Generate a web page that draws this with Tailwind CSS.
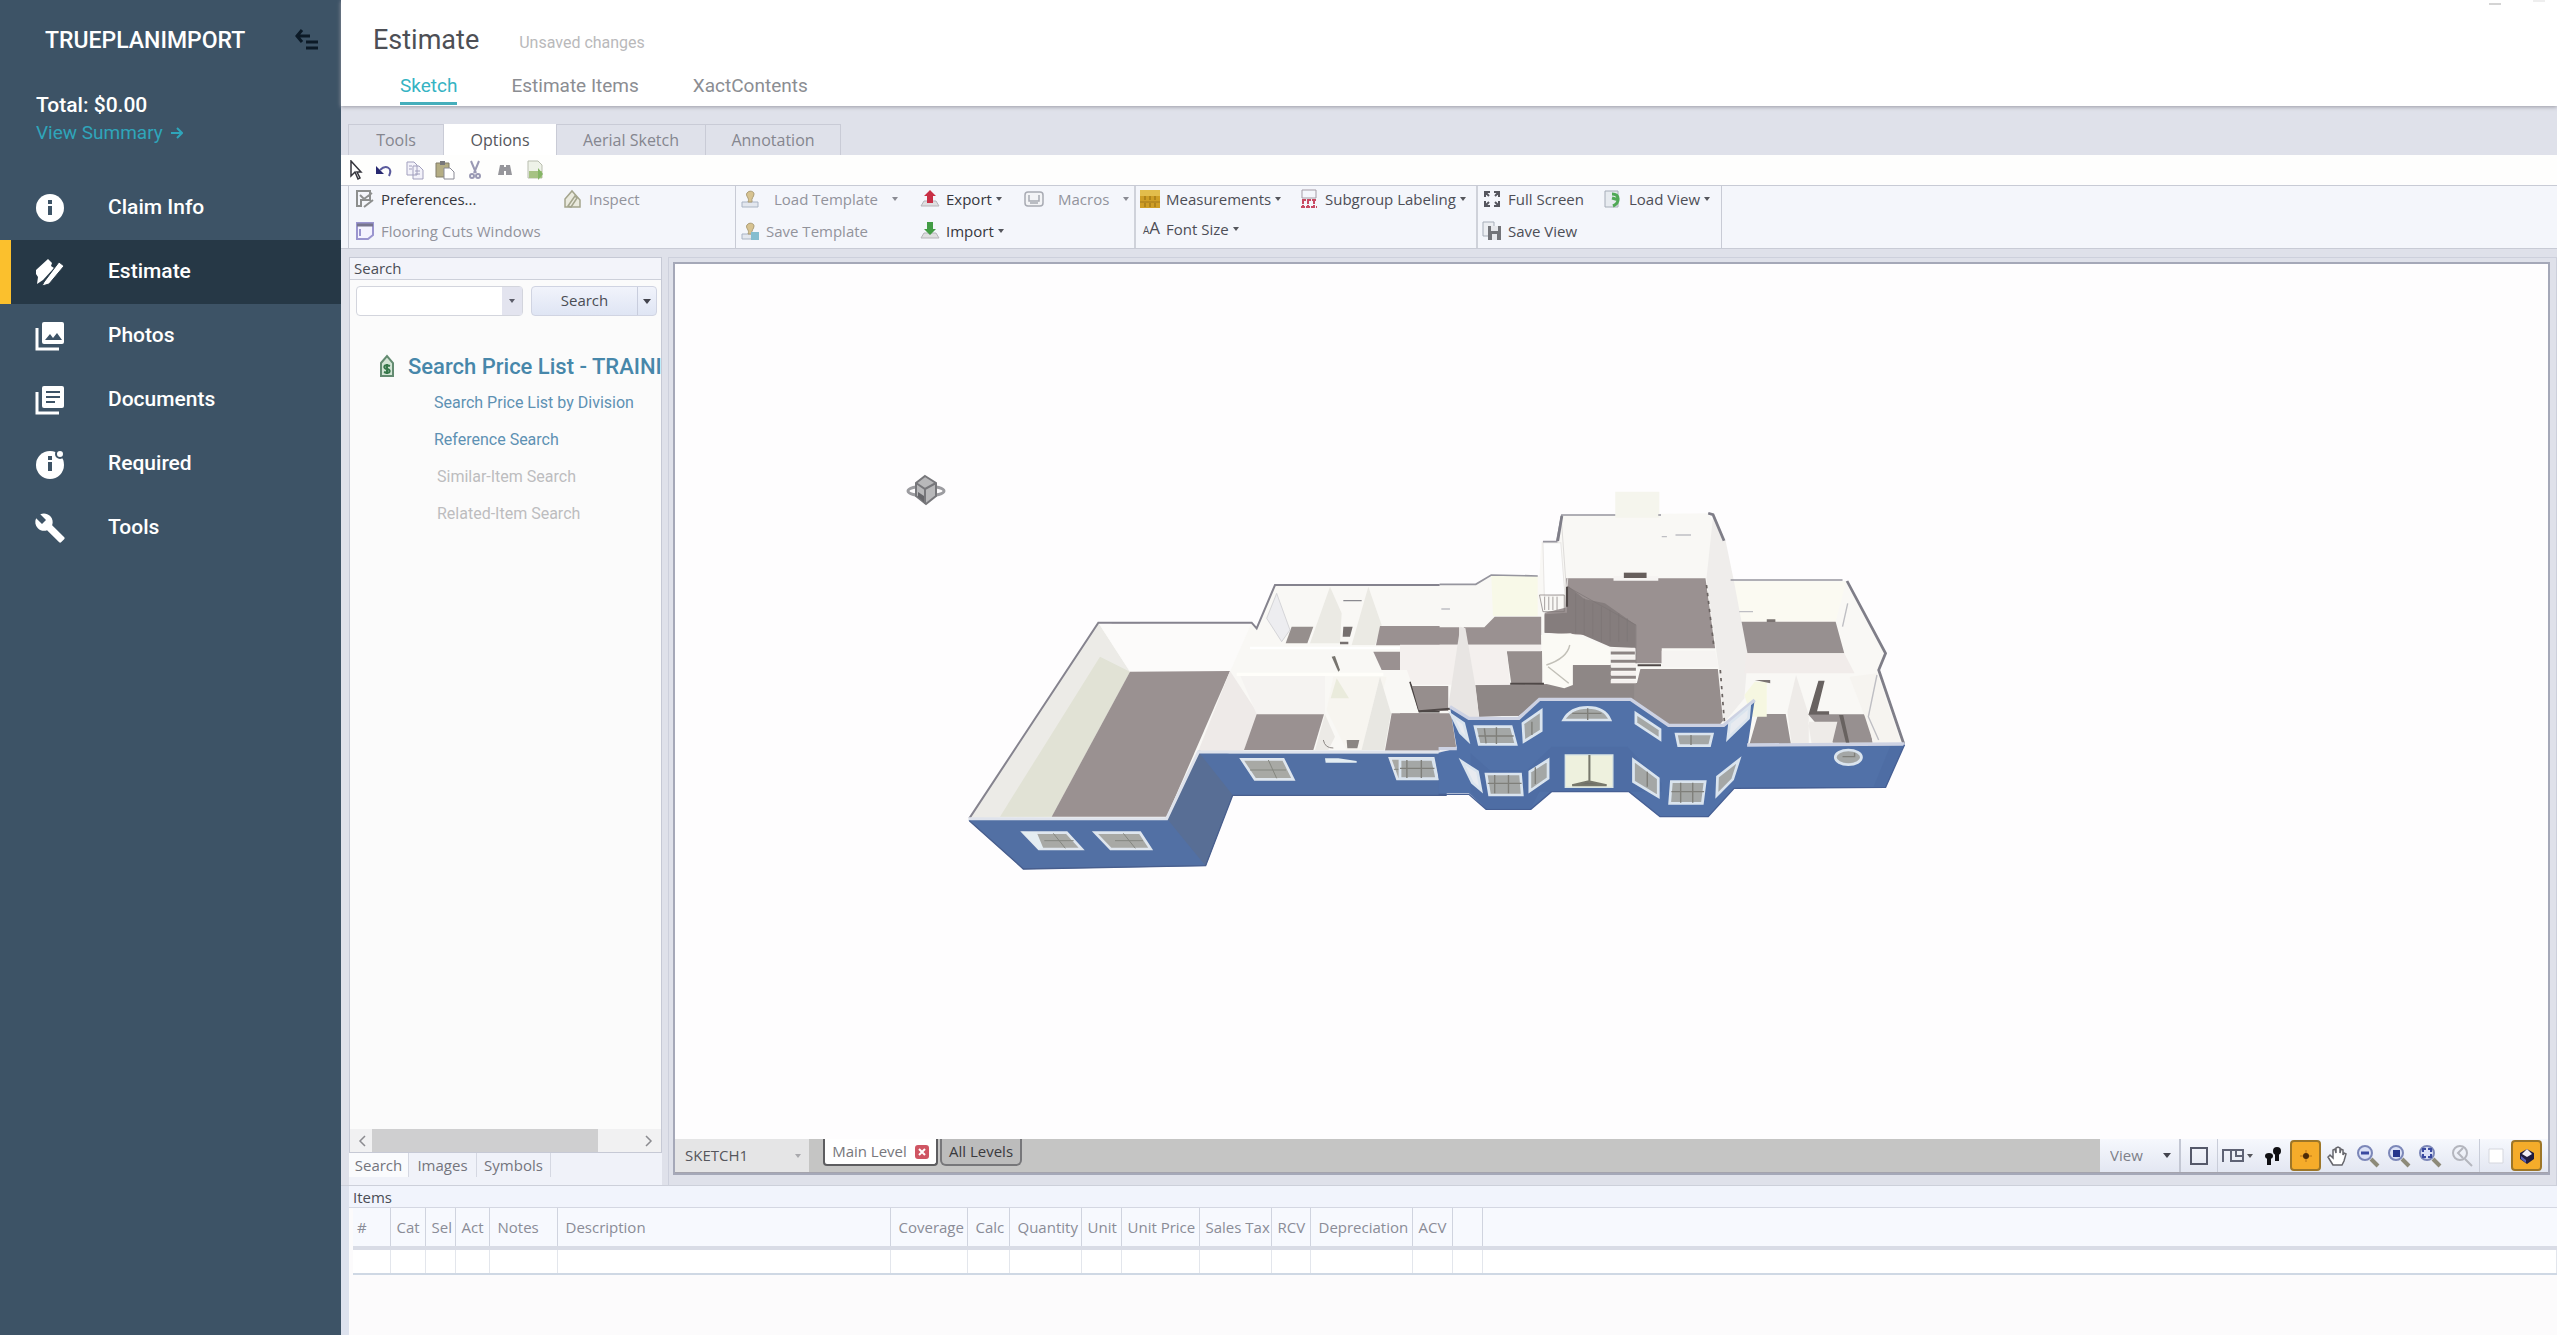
<!DOCTYPE html>
<html lang="en">
  <head>
    <meta charset="UTF-8" />
    <meta name="viewport" content="width=device-width, initial-scale=1.0" />
    <title>Estimate - Sketch</title>
    <script src="https://cdn.jsdelivr.net/npm/@tailwindcss/browser@4"></script>
  </head>
  <body class="flex h-screen overflow-hidden bg-[#dfe1ea] font-['Open_Sans',sans-serif] text-[15px] text-[#4a4d55]">
    <!-- Sidebar -->
    <aside class="w-[341px] shrink-0 bg-[#3d5366] font-[Roboto,sans-serif] text-white">
      <div class="flex h-[82px] items-center justify-between pl-[45px] pr-[22px]">
        <h2 class="text-[23px] font-medium">TRUEPLANIMPORT</h2>
        <button aria-label="Collapse menu">
          <svg class="h-6 w-6" viewBox="0 0 24 24" fill="none" stroke="#0c1a27" stroke-width="3"><path d="M1 7h14M7 1L2 7l5 6M11 13h12M11 19h12" /></svg>
        </button>
      </div>
      <div class="h-[94px] pl-[36px] pt-2">
        <p class="text-[21px] font-medium leading-[30px]">Total: $0.00</p>
        <a href="#" class="flex items-center gap-2 text-[19px] leading-[26px] text-[#2fa5ba]">View Summary
          <svg class="h-3 w-3" viewBox="0 0 12 12" fill="none" stroke="#2fa5ba" stroke-width="2"><path d="M0 6h10M6 1l5 5-5 5" /></svg>
        </a>
      </div>
      <nav class="text-[21px] font-medium">
        <a href="#" class="flex h-16 items-center gap-[42px] pl-[34px]">
          <svg class="h-8 w-8" viewBox="0 0 32 32"><circle cx="16" cy="16" r="14" fill="#fff" /><path d="M14 14h4v9h-4zM14 8h4v4h-4z" fill="#3d5366" /></svg>
          Claim Info
        </a>
        <a href="#" class="flex h-16 items-center gap-[42px] border-l-[11px] border-[#fbc02d] bg-[#263846] pl-[23px]">
          <svg class="h-8 w-8" viewBox="0 0 32 32" fill="#fff"><path d="M2 14L14 3l4 4-1 3 3 2L9 24l-6 4 1-7-2-3z" /><path d="M10 26L25 6l5 4-15 18-7 2z" stroke="#263846" /></svg>
          Estimate
        </a>
        <a href="#" class="flex h-16 items-center gap-[42px] pl-[34px]">
          <svg class="h-8 w-8" viewBox="0 0 32 32"><rect x="8" y="2" width="22" height="22" rx="2" fill="#fff" /><path d="M3 8v21h22" fill="none" stroke="#fff" stroke-width="3" /><path d="M11 20l5-6 3 4 4-5 5 7z" fill="#3d5366" /></svg>
          Photos
        </a>
        <a href="#" class="flex h-16 items-center gap-[42px] pl-[34px]">
          <svg class="h-8 w-8" viewBox="0 0 32 32"><rect x="8" y="2" width="22" height="22" rx="2" fill="#fff" /><path d="M3 8v21h22" fill="none" stroke="#fff" stroke-width="3" /><path d="M12 8h14M12 13h14M12 18h9" stroke="#3d5366" stroke-width="2" /></svg>
          Documents
        </a>
        <a href="#" class="flex h-16 items-center gap-[42px] pl-[34px]">
          <svg class="h-8 w-8" viewBox="0 0 32 32"><circle cx="16" cy="17" r="14" fill="#fff" /><path d="M14 14h4v9h-4zM14 8h4v4h-4z" fill="#3d5366" /><circle cx="26" cy="6" r="4" fill="#fff" stroke="#3d5366" stroke-width="2" /></svg>
          Required
        </a>
        <a href="#" class="flex h-16 items-center gap-[42px] pl-[34px]">
          <svg class="h-8 w-8" viewBox="0 0 24 24" fill="#fff"><path d="M22.7 19l-9.1-9.1c.9-2.300.4-5-1.500-6.900-2-2-5-2.400-7.400-1.300L9 6 6 9 1.600 4.700C.4 7.100.9 10.100 2.900 12.100c1.900 1.900 4.600 2.400 6.900 1.500l9.100 9.100c.4.4 1 .4 1.400 0l2.300-2.300c.5-.4.5-1.100.1-1.400z" /></svg>
          Tools
        </a>
      </nav>
    </aside>

    <main class="flex min-w-0 flex-1 flex-col">
      <header class="z-10 flex h-[106px] shrink-0 justify-between bg-white font-[Roboto,sans-serif] shadow-[0_1px_4px_#9a9aa4]">
        <div>
          <div class="flex h-[68px] items-end gap-10 pl-8">
            <h1 class="text-[27px] leading-[56px] text-[#4d4f55]">Estimate</h1>
            <span class="text-[16px] leading-[50px] text-[#b9b9bb]">Unsaved changes</span>
          </div>
          <nav class="flex h-[37px] gap-[54px] pl-[59px] text-[19px] leading-9 text-[#8b8d92]">
            <a href="#" class="border-b-3 border-[#45aebb] text-[#35b3c3]">Sketch</a>
            <a href="#">Estimate Items</a>
            <a href="#">XactContents</a>
          </nav>
        </div>
        <div class="flex gap-8 pr-3">
          <span class="h-[5px] w-3 border-b-2 border-[#d4d4d4]"></span>
          <span class="h-[2px] w-3 bg-[#eeeeee]"></span>
        </div>
      </header>

      <!-- Ribbon tabs -->
      <div class="flex h-[49px] shrink-0 items-end pl-[7px] text-[16px] text-[#85868f]">
        <button class="h-[31px] w-24 border border-b-0 border-[#c9cbd6]">Tools</button>
        <button class="h-[31px] w-28 bg-white text-[#55565c]">Options</button>
        <button class="h-[31px] w-[150px] border border-b-0 border-[#c9cbd6]">Aerial Sketch</button>
        <button class="h-[31px] w-[135px] border border-b-0 border-l-0 border-[#c9cbd6]">Annotation</button>
      </div>
      <div class="flex h-[30px] shrink-0 items-center gap-[10px] bg-[#fefefd] pl-1">
        <button aria-label="Select"><svg class="h-5 w-5" viewBox="0 0 20 20"><path d="M6 1v15l4-4 3 7 2-1-3-6h4z" fill="#fff" stroke="#34343c" stroke-width="1.500" /></svg></button>
        <button aria-label="Undo"><svg class="h-5 w-5" viewBox="0 0 20 20"><path d="M1 6v8h8z" fill="#272870" /><path d="M5 10c6-6 13-2 9 6" fill="none" stroke="#5a5a9c" stroke-width="2" /></svg></button>
        <button aria-label="Copy"><svg class="h-5 w-5" viewBox="0 0 20 20" fill="#f3f2fa" stroke="#a19fbd"><path d="M2 2h7l3 3v10H2zM8 6h6l4 4v9H8z" /><path d="M10 11h5M10 14h5M4 6h3M4 9h3" /></svg></button>
        <button aria-label="Paste"><svg class="h-5 w-5" viewBox="0 0 20 20"><path d="M1 3h13v14H1z" fill="#b4ad84" stroke="#817d68" /><path d="M5 1h5v4H5z" fill="#77777a" /><path d="M9 8h6l4 4v7H9z" fill="#fff" stroke="#8a8a95" /></svg></button>
        <button aria-label="Cut"><svg class="h-5 w-5" viewBox="0 0 20 20" fill="none" stroke="#9a99b4" stroke-width="2"><path d="M6 1l5 12M14 1L9 13" /><circle cx="7" cy="16" r="2" /><circle cx="13" cy="16" r="2" /></svg></button>
        <button aria-label="Find"><svg class="h-5 w-5" viewBox="0 0 20 20" fill="#96969b"><path d="M5 5h4v2h2V5h4l2 10h-6v-4H9v4H3z" /></svg></button>
        <button aria-label="Add image"><svg class="h-5 w-5" viewBox="0 0 20 20"><path d="M3 1h10l4 4v13H3z" fill="#eef2e8" stroke="#b9beaf" /><path d="M4 11h13v7H4z" fill="#a6c283" /><path d="M13 8l5 6-5 6z" fill="#85b566" /></svg></button>
      </div>

      <!-- Ribbon -->
      <div class="flex h-[64px] shrink-0 border-y border-[#c8cbd5] bg-[#f4f6fb] pl-[7px] text-[15px] leading-6 text-[#92939b]">
        <div class="grid w-[388px] grid-cols-[208px_1fr] content-start gap-y-2 border-x border-[#c8cbd5] pl-1.5 pt-px">
          <button class="flex items-center gap-1.5 text-[#36373d]"><svg class="h-5 w-5" viewBox="0 0 20 20" fill="none" stroke="#8d8f8e" stroke-width="2"><path d="M2 2h13v9H6v6H2zM5 6l4 4 8-6M9 18l9-7" /></svg>Preferences...</button>
          <button class="flex items-center gap-1.5"><svg class="h-5 w-5" viewBox="0 0 20 20" fill="#eaeade" stroke="#a4a58d" stroke-width="1.500"><path d="M2 18V10l7-8 8 9v7z" /><path d="M5 17l7-10 2 2-6 9z" /></svg>Inspect</button>
          <button class="flex items-center gap-1.5"><svg class="h-5 w-5" viewBox="0 0 20 20" fill="#f4f3ff" stroke="#9a95cf" stroke-width="2"><path d="M2 2h16v12l-5 4H2z" /><path d="M2 4h16" stroke="#77758e" stroke-width="3" /><path d="M5 8v7" /></svg>Flooring Cuts Windows</button>
        </div>
        <div class="grid w-[400px] grid-cols-[180px_104px_1fr] content-start gap-y-2 border-r-2 border-[#cfd2da] pl-1 pt-px">
          <button class="flex items-center gap-3.5"><svg class="h-5 w-5" viewBox="0 0 20 20"><path d="M2 13h16v5H2z" fill="#e3e7ee" stroke="#a9b4c4" /><path d="M8 13c2-4-3-6-1-9 2-3 7-2 7 1s-3 4-2 8z" fill="#d7c391" stroke="#ab9c75" /></svg>Load Template<span class="border-x-3 border-t-4 border-x-transparent border-t-[#8a8b93]"></span></button>
          <button class="flex items-center gap-1.5 text-[#36373d]"><svg class="h-5 w-5" viewBox="0 0 20 20"><path d="M1 17l3-5h12l3 5z" fill="#dedee0" stroke="#b4b4b9" /><path d="M10 1l6 6h-3v7H7V7H4z" fill="#c82f45" /></svg>Export<span class="-ml-0.5 border-x-3 border-t-4 border-x-transparent border-t-[#55565c]"></span></button>
          <button class="flex items-center gap-3.5"><svg class="h-5 w-5" viewBox="0 0 20 20" fill="#f3f4f6" stroke="#a8abb3" stroke-width="1.500"><rect x="1" y="3" width="18" height="14" rx="3" /><path d="M5 6v6h10V6M6 14h8" /></svg>Macros<span class="border-x-3 border-t-4 border-x-transparent border-t-[#8a8b93]"></span></button>
          <button class="flex items-center gap-1.5"><svg class="h-5 w-5" viewBox="0 0 20 20"><path d="M2 13h16v5H2z" fill="#e3e7ee" stroke="#a9b4c4" /><path d="M8 13c2-4-3-6-1-9 2-3 7-2 7 1s-3 4-2 8z" fill="#d7c391" stroke="#ab9c75" /><path d="M11 11h8v8h-8z" fill="#84bdcf" /></svg>Save Template</button>
          <button class="flex items-center gap-1.5 text-[#36373d]"><svg class="h-5 w-5" viewBox="0 0 20 20"><path d="M1 17l3-5h12l3 5z" fill="#dedee0" stroke="#b4b4b9" /><path d="M10 14l6-6h-3V1H7v7H4z" fill="#429c45" /></svg>Import<span class="-ml-0.5 border-x-3 border-t-4 border-x-transparent border-t-[#55565c]"></span></button>
        </div>
        <div class="grid w-[342px] grid-cols-[159px_1fr] content-start gap-y-1.5 border-r-2 border-[#cfd2da] pl-1 pt-px text-[#4d4e56]">
          <button class="flex items-center gap-1.5"><svg class="h-5 w-5" viewBox="0 0 20 20"><path d="M0 1h20v18H0z" fill="#cf9e26" /><path d="M0 1h20v6H0z" fill="#e3bd4c" /><path d="M5 7v4m5-4v4m5-4v4M5 14v4m5-4v4m5-4v4" stroke="#916a11" /><path d="M0 13h20" stroke="#a0771b" /></svg>Measurements<span class="-ml-0.5 border-x-3 border-t-4 border-x-transparent border-t-[#55565c]"></span></button>
          <button class="flex items-center gap-1.5"><svg class="h-5 w-5" viewBox="0 0 20 20" fill="none"><path d="M3 1h14v8H3z" stroke="#a49ba5" /><path d="M3 11h14M4 11v8M9 11v8M15 11v8M2 18h16" stroke="#c84a63" stroke-width="2" stroke-dasharray="4 1" /></svg>Subgroup Labeling<span class="-ml-0.5 border-x-3 border-t-4 border-x-transparent border-t-[#55565c]"></span></button>
          <button class="flex items-center gap-1.5"><span class="w-5 text-right text-[10px] leading-4">A<span class="text-[17px]">A</span></span>Font Size<span class="-ml-0.5 border-x-3 border-t-4 border-x-transparent border-t-[#55565c]"></span></button>
        </div>
        <div class="grid w-[244px] grid-cols-[121px_1fr] content-start gap-y-2 border-r border-[#c8cbd5] pl-1 pt-px text-[#4d4e56]">
          <button class="flex items-center gap-1.5"><svg class="h-5 w-5" viewBox="0 0 20 20" fill="none" stroke="#55565e" stroke-width="2"><path d="M3 8V3h5M12 3h5v5M3 12v5h5M12 17h5v-5M4 4l3 3M16 4l-3 3M4 16l3-3M16 16l-3-3" /></svg>Full Screen</button>
          <button class="flex items-center gap-1.5"><svg class="h-5 w-5" viewBox="0 0 20 20"><path d="M2 2h13v16H2z" fill="#e7ebf0" stroke="#a6adb8" /><path d="M9 5c8 0 8 9 1 12M9 9l7 2" fill="none" stroke="#51a957" stroke-width="3" /></svg>Load View<span class="-ml-0.5 border-x-3 border-t-4 border-x-transparent border-t-[#55565c]"></span></button>
          <button class="flex items-center gap-1.5"><svg class="h-5 w-5" viewBox="0 0 20 20"><path d="M1 1h11v14H1z" fill="#eceef2" stroke="#a6adb8" /><path d="M6 5h13v14H6z" fill="#737479" /><path d="M9 5h7v5H9zM10 13h5v6h-5z" fill="#e7e8ec" /></svg>Save View</button>
        </div>
      </div>

      <!-- Search pane and drawing area -->
      <div class="flex min-h-0 flex-1 pl-2 pt-2">
        <section class="flex w-[313px] shrink-0 flex-col">
          <div class="flex min-h-0 flex-1 flex-col border border-[#c6c9d5] bg-[#fbfbfb]">
            <h3 class="h-[22px] shrink-0 border-b border-[#cdd0da] bg-[#f3f4fa] pl-1 text-[15px] leading-5">Search</h3>
            <div class="flex h-9 shrink-0 items-end gap-2 pl-1.5">
              <div class="flex h-[30px] w-[167px] rounded-sm border border-[#d3d5dd] bg-white">
                <input type="text" aria-label="Search text" class="min-w-0 flex-1 px-1 outline-none" />
                <button aria-label="Search history" class="flex w-5 items-center justify-center bg-[#e3e4ef]"><span class="border-x-3 border-t-4 border-x-transparent border-t-[#5b5c68]"></span></button>
              </div>
              <div class="flex h-[30px] w-[126px] rounded-sm border border-[#d0d4e2] bg-linear-to-b from-[#f1f3fb] to-[#dfe5f4]">
                <button class="flex-1 border-r border-[#c8cddd] pb-0.5 text-[15px]">Search</button>
                <button aria-label="Search options" class="flex w-[18px] items-center justify-center"><span class="border-x-4 border-t-5 border-x-transparent border-t-[#43444e]"></span></button>
              </div>
            </div>
            <div class="flex-1 overflow-hidden whitespace-nowrap pt-[31px] font-[Roboto,sans-serif] text-[16px]">
              <a href="#" class="flex h-[38px] items-center gap-3 pl-[28px] text-[22px] font-medium text-[#4787aa]">
                <svg class="h-6 w-[18px] shrink-0" viewBox="0 0 18 24"><path d="M3 9l6-7 6 7v13H3z" fill="#d3e5d6" stroke="#638b71" stroke-width="2" /><path d="M12 12c-7-3-7 3-3 3s4 6-3 3M9 10v10" fill="none" stroke="#37784b" stroke-width="2" /></svg>
                Search Price List - TRAINI
              </a>
              <a href="#" class="block h-[37px] pl-[84px] leading-9 text-[#5e91b3]">Search Price List by Division</a>
              <a href="#" class="block h-[37px] pl-[84px] leading-9 text-[#5e91b3]">Reference Search</a>
              <a href="#" class="block h-[37px] pl-[87px] leading-9 text-[#bdbdbf]">Similar-Item Search</a>
              <a href="#" class="block h-[37px] pl-[87px] leading-9 text-[#bdbdbf]">Related-Item Search</a>
            </div>
            <div class="flex h-[23px] shrink-0 items-center bg-[#f1f1f2] px-2">
              <svg class="h-3 w-2" viewBox="0 0 8 12" fill="none" stroke="#8b8b90" stroke-width="1.500"><path d="M7 1L2 6l5 5" /></svg>
              <div class="ml-1.5 h-full w-[226px] bg-[#cfcfd0]"></div>
              <svg class="ml-auto h-3 w-2" viewBox="0 0 8 12" fill="none" stroke="#8b8b90" stroke-width="1.500"><path d="M1 1l5 5-5 5" /></svg>
            </div>
          </div>
          <div class="flex h-8 shrink-0 items-start bg-[#f0f2f9] text-[15px] leading-6 text-[#74757d]">
            <button class="w-[60px] border-r border-[#d5d8e2] bg-[#fafbfd]">Search</button>
            <button class="w-[68px] border-r border-[#d5d8e2]">Images</button>
            <button class="w-[74px] border-r border-[#d5d8e2]">Symbols</button>
          </div>
        </section>

        <section class="ml-1.5 flex min-w-0 flex-1 flex-col border border-b-0 border-[#cdd0dc] pb-2.5 pl-1 pr-1.5 pt-1">
          <div class="flex min-h-0 flex-1 flex-col border-2 border-[#a5a8b8]">
            <div class="relative min-h-0 flex-1 overflow-hidden bg-[#fefdfe]">
              <!-- Orbit cursor -->
              <svg class="absolute left-[230px] top-[209px] h-[34px] w-[42px]" viewBox="0 0 42 34"><ellipse cx="21" cy="18" rx="18" ry="5" fill="none" stroke="#9c9ca0" stroke-width="3" /><path d="M20 3l11 7v13l-10 8-10-8V10z" fill="#b8b8ba" stroke="#77777b" stroke-width="2" /><path d="M11 10l9 6 11-6M20 16v15" fill="none" stroke="#77777b" stroke-width="2" /><path d="M13 19l6 4v6l-6-5z" fill="#66666a" /></svg>

              <!-- 3D model -->
              <svg class="absolute left-[285px] top-[216px] h-[400px] w-[960px]" viewBox="960 480 960 400">
                <g transform="translate(940 560) scale(.33333)">
                  <path d="M90 775L475 188h460l15 17L1005 75h495v510H775l-95 190z" fill="#f9f8f5" />
                  <path d="M90 775L475 188l95 147-235 435z" fill="#ecebe7" />
                  <path d="M180 770L480 290l90 45-235 435z" fill="#e1e2d5" />
                  <path d="M475 188l95 147h300l65-147z" fill="#fcfbfa" />
                  <path d="M570 335l300-2-190 437H335z" fill="#9a9191" />
                  <path d="M870 333l85 130-45 110H775z" fill="#eeeae8" />
                  <path d="M900 345l50 118h205V345z" fill="#f5f3f1" />
                  <path d="M950 463h202l-32 107H912z" fill="#9a9191" />
                  <path d="M1055 200h65l-18 50h-65z" fill="#968f8d" />
                  <path d="M1170 80l-60 170h90l5-90zM1285 80l-50 175h70l20-60z" fill="#ebeae4" />
                  <path d="M1210 200h28l-8 30h-22zM1200 245h25v8h-25z" fill="#777170" />
                  <path d="M1320 198h180v58h-192z" fill="#9a9191" />
                  <path d="M930 260h570v8H930z" fill="#fff" />
                  <path d="M1300 275h90l15 55h-80z" fill="#9a9191" />
                  <path d="M890 338h440v10H890z" fill="#fffefa" />
                  <path d="M1175 290l20 45 5-5-15-42z" fill="#77746e" />
                  <path d="M1180 350l-20 100 60 120h60l60-220z" fill="#f7f5f0" />
                  <path d="M1320 350l-55 220h68l20-110z" fill="#e8e7e2" />
                  <path d="M1190 355l-18 60h55z" fill="#eaebdc" />
                  <path d="M1155 463l-30 107h40l20-40z" fill="#eceae6" />
                  <path d="M1220 540h38l-6 25h-30z" fill="#8b8683" />
                  <path d="M1150 540q5 25 30 24" fill="none" stroke="#8b8683" stroke-width="3" />
                  <path d="M1355 460h145v112h-165zM1415 378h85v76h-65z" fill="#9a9191" />
                  <path d="M1410 365l28 90h62" fill="none" stroke="#4b4544" stroke-width="5" />
                  <path d="M1010 100l40 110-25 35-45-70z" fill="#ededf0" stroke="#c5c5ca" stroke-width="2" />
                  <path d="M1210 75h38M1210 122h55M515 188h85" stroke="#8b8a90" stroke-width="4" />
                  <path d="M88 775L475 188h460l15 17L1005 75h495" fill="none" stroke="#85838e" stroke-width="6" />
                  <path d="M85 780l595-5 95-203 95 8h650v126H878l-81 212-547 10z" fill="#5270a4" />
                  <path d="M680 775l95-200 103 130-81 213z" fill="#586e95" />
                  <path d="M85 776h595l95-200h745" fill="none" stroke="#dfe3ec" stroke-width="9" />
                  <path d="M88 782l162 145 547-10 81-211h642" fill="none" stroke="#485e8d" stroke-width="4" />
                  <g fill="#a8a9a5" stroke="#dfe6ee" stroke-width="8">
                    <path d="M250 818h130l45 49H297zM465 818h135l32 49H512zM905 598h125l30 60H945zM1350 595h130l12 62H1372z" />
                  </g>
                  <path d="M245 815l50 52 15-2-20-48zM1155 595h40l55 8v5h-93z" fill="#e4edf2" />
                  <path d="M313 842h88M525 842h84M930 630h108M1362 628h115M340 820l36 45M550 820l36 45M985 600l25 55M1418 598l18 55" stroke="#85877f" stroke-width="3" />
                </g>
                <g transform="translate(1400 470) scale(.34438 .33333)">
                  <path d="M115 343h105l45-28 140 3 5-103h45l15-80 425-5 45 80 20 120 340 3 110 217-20 50 75 222-455 3-70-60-80 0-100-75H405l-60 57H200l-85 100z" fill="#f9f8f5" />
                  <path d="M265 318h135v120H270z" fill="#f8f9e8" />
                  <path d="M625 65h128v78H625z" fill="#f5f5ed" />
                  <path d="M960 335h335l-30 120H990z" fill="#fbfaf2" />
                  <!-- floors -->
                  <path d="M0 472h172v52H0zM185 472h60l30-32h135v84H190zM0 730h148l15 100-48 10H0z" fill="#9a9191" />
                  <path d="M482 325h405l28 210H760v45h-75V465L540 495 420 488v-60l60-15z" fill="#9a9191" />
                  <path d="M485 345l50 42 60 13 90 65v70l-75-5-85-38-105-4v-55l65-5z" fill="#857d7d" />
                  <path d="M310 543h103v97h-90zM35 648h105v75H55zM218 646l200-4h60l25-58h110v55h75l10-42h225l15 155-10 12H780L670 688H405l-60 50H230z" fill="#968e8d" />
                  <path d="M220 646h260l20-60h110v55h70v45H405l-60 50-115 5z" fill="#8e8786" />
                  <path d="M985 455h280l25 95h-285zM1040 732h80l15 90h-120zM1185 733h175l12 85h-115z" fill="#979090" />
                  <!-- partitions -->
                  <path d="M890 325l20-195 35 80 25 125 40 220-10 130-60 75-15-170z" fill="#efedeb" />
                  <path d="M0 524h410v20H310l10 100H35L20 600H0z" fill="#f4f0ee" />
                  <path d="M175 470l-35 240 60 35h30l-10-90-30-180z" fill="#e8e5e3" />
                  <path d="M410 495l85-5 115 45v50H502v60l-25 10-60-15z" fill="#fbfaf5" />
                  <path d="M415 218h52l12 157-60 3z" fill="#fdfdfd" stroke="#e8e6e4" stroke-width="3" />
                  <path d="M468 140l16 230 3-45" fill="none" stroke="#dedcda" stroke-width="3" />
                  <path d="M760 542h155l10 50H760zM620 318h130v14H620z" fill="#f6f4f2" />
                  <path d="M650 308h66v16h-66z" fill="#665e5b" />
                  <path d="M1005 550h285l30 60H1000z" fill="#f1ecea" />
                  <path d="M1150 615l-25 110 12 98h50V735zM1185 755h85l-15 65h-60z" fill="#eeebe8" />
                  <path d="M1030 635h35v105h-45l-20-65z" fill="#f6f7e1" />
                  <path d="M1305 620l45 120 25 80h80L1385 610z" fill="#f6f4f0" />
                  <path d="M1215 632h18l-22 92h35v10h-60zM1275 735h12l18 84h-10z" fill="#686260" />
                  <path d="M1030 630h45v10zM1065 448h25v8h-25z" fill="#7b7472" />
                  <!-- stairs and rail -->
                  <path d="M612 538h70M612 562h73M612 585h73M612 610h73M612 635h73" stroke="#f5f1ef" stroke-width="10" />
                  <path d="M612 549h70M612 574h73M612 598h73M612 622h73" stroke="#8c8483" stroke-width="9" />
                  <path d="M405 375h72v50h-62zM420 380v40m12-40v40m12-40v40m12-40v40M485 350l200 115v115M510 370v120m25-105v110m25-95v100m25-90v105m25-95v95m25-85v85m25-70v70" fill="none" stroke="#7d7575" stroke-width="2" />
                  <path d="M425 585q60-20 68-60M430 590l60 50" fill="none" stroke="#c2c0b8" stroke-width="4" />
                  <path d="M690 586h68M320 641h98M55 724l90-8M485 350v60" stroke="#4f4847" stroke-width="6" />
                  <path d="M890 345l22 190M930 600l12 155" stroke="#6b6462" stroke-width="5" stroke-dasharray="10 14" />
                  <!-- wall tops -->
                  <path d="M115 343h105l45-28 135 3M415 215h40l15-80h155M750 135h8M960 330h325" fill="none" stroke="#96959e" stroke-width="5" />
                  <path d="M895 130l14 4 32 78M1298 333l112 217-20 50 73 222M470 138l-12 75" fill="none" stroke="#7f7e88" stroke-width="8" />
                  <path d="M1385 615l-15 75-10 50 30 70M1300 400l-15 70M120 417h25M800 195h45M760 200h15M985 425h40" fill="none" stroke="#bebec3" stroke-width="4" />
                  <!-- front elevation -->
                  <path d="M112 848l53-13-20-125 55 38h145l60-58h265l110 78h160l90-78-20 135 455-3-55 131-440 2-75 85H755l-90-75H440l-60 53H250l-50-48h-88z" fill="#5171a8" />
                  <path d="M1465 824l-60 128-30-2 50-125zM440 965H405l-25 50H250l-45-50V850l55 50h110l70-70h220l100 110v25z" fill="#4d6ba1" opacity=".6" />
                  <path d="M112 836h53M145 710l55 35h145l60-57h265l110 78h160l90-76M1008 825l457-3" fill="none" stroke="#cdd2e3" stroke-width="10" />
                  <path d="M112 973h88l50 45h130l60-53h225l90 75h140l75-85 440-3 55-128" fill="none" stroke="#465f94" stroke-width="4" />
                  <g fill="#a4a7a6" stroke="#dae4ee" stroke-width="8">
                    <path d="M218 770h105l14 53H230zM357 760l53-38v60l-50 32zM685 730l70 48v30l-70-48zM802 792h105l-8 35h-90zM250 912h100l5 63h-95zM377 905l53-35v55l-53 38zM678 870l72 55v55l-72-45zM788 935h98l-8 65h-95zM922 920l62-50-18 58-46 48zM0 868h95l12 58H0z" />
                    <path d="M475 750q20-38 70-38t65 38z" />
                    <path d="M150 735l35 25 12 50-22-22zM180 875l45 30 10 55-25-22zM1015 710l-58 50-5 45 60-60z" fill="#e8ebf0" />
                    <ellipse cx="1302" cy="862" rx="38" ry="22" />
                  </g>
                  <path d="M245 775l5 45M280 772v50M228 798h102M275 915v55M315 915v55M255 940h98M815 938v60M850 938v60M788 965h95M545 715v35M500 730h85M383 755v40M393 892v50M718 905v45M20 870v54M62 870v54M0 895h100M845 795v30M1285 860h35v-12" fill="none" stroke="#7f7f7a" stroke-width="4" />
                  <path d="M480 855h138v97H480z" fill="#eef1de" stroke="#dbe6e4" stroke-width="4" />
                  <path d="M550 855v85M500 946l48-12 52 12z" fill="#6d6d67" stroke="#77786c" stroke-width="6" />
                </g>
              </svg>
            </div>

            <!-- Level tabs and view tools -->
            <div class="flex h-[34px] shrink-0 items-start justify-between border-b border-[#a4a3ad] bg-[#c5c5c4]">
              <div class="flex items-start">
                <div class="flex h-[33px] w-[134px] items-center bg-[#e5e5e6] pr-2">
                  <select aria-label="Sketch" class="h-full flex-1 appearance-none pl-2.5 text-[15px] text-[#55565c]"><option>SKETCH1</option></select>
                  <span class="border-x-3 border-t-4 border-x-transparent border-t-[#a9a9ad]"></span>
                </div>
                <button class="ml-3.5 flex h-[27px] w-[115px] items-center justify-center gap-2 rounded-b border-2 border-t-0 border-[#5d5d60] bg-white text-[15px] text-[#77777c]">Main Level
                  <svg class="h-3.5 w-3.5" viewBox="0 0 14 14"><rect width="14" height="14" rx="3" fill="#cf5563" /><path d="M4 4l6 6M10 4l-6 6" stroke="#fff" stroke-width="2" /></svg>
                </button>
                <button class="ml-0.5 h-[27px] w-[82px] rounded-b-md border-2 border-t-0 border-[#77777a] bg-[#bcbcbc] text-[15px] text-[#3a3a3d]">All Levels</button>
              </div>
              <div class="flex h-[33px] items-center bg-linear-to-b from-[#f6f8fd] to-[#e3e7f2] pr-1.5">
                <div class="flex h-full w-[81px] items-center border-r-2 border-[#c3c7d3] pr-2">
                  <select aria-label="View" class="h-full flex-1 appearance-none pl-2.5 text-[15px] text-[#7d7f88]"><option>View</option></select>
                  <span class="border-x-4 border-t-5 border-x-transparent border-t-[#43444e]"></span>
                </div>
                <button aria-label="Plan view" class="flex h-full w-[37px] items-center justify-center border-r border-[#c9cdd9]"><svg class="h-5 w-5" viewBox="0 0 20 20" fill="none" stroke="#55596a" stroke-width="2"><path d="M2 2h16v16H2z" /></svg></button>
                <button aria-label="Room view" class="flex h-full w-[38px] items-center justify-center gap-0.5"><svg class="h-5 w-6" viewBox="0 0 24 20" fill="none" stroke="#5f6375" stroke-width="2"><path d="M2 16V4h8v11h12V4H10M15 4v6h7" /></svg><span class="border-x-3 border-t-4 border-x-transparent border-t-[#55565c]"></span></button>
                <button aria-label="Walk" class="flex h-full w-[34px] items-center justify-center"><svg class="h-5 w-5" viewBox="0 0 20 20" fill="#101014"><ellipse cx="6" cy="10" rx="4" ry="3" /><path d="M4 12h4v7H4z" /><ellipse cx="14" cy="5" rx="4" ry="4" /><path d="M12 8h4v7h-4z" /></svg></button>
                <button aria-label="Orbit" class="flex h-[31px] w-[31px] items-center justify-center rounded border-2 border-[#9d7628] bg-[#f5ac2a]"><svg class="h-4 w-4" viewBox="0 0 16 16"><path d="M8 2v12M2 8h12" stroke="#b9741a" /><circle cx="8" cy="8" r="3" fill="#4d2c08" /></svg></button>
                <button aria-label="Pan" class="flex h-full w-[31px] items-center justify-center"><svg class="h-5 w-5" viewBox="0 0 20 20" fill="#fff" stroke="#66666c" stroke-width="1.500"><path d="M6 19l-5-8 2-2 3 3V4l2-1 1 4V2l2-1 2 1v5l1-4 2 1v5l1-2 2 1-2 7-2 4z" /></svg></button>
                <button aria-label="Zoom out" class="flex h-full w-[31px] items-center justify-center"><svg class="h-6 w-6" viewBox="0 0 24 24"><circle cx="9" cy="9" r="7" fill="#dbe1f6" stroke="#7c87b8" stroke-width="2" /><path d="M5 9h8" stroke="#3a4aa0" stroke-width="3" /><path d="M15 15l7 7" stroke="#8d8a79" stroke-width="4" /></svg></button>
                <button aria-label="Zoom window" class="flex h-full w-[31px] items-center justify-center"><svg class="h-6 w-6" viewBox="0 0 24 24"><circle cx="9" cy="9" r="7" fill="#dbe1f6" stroke="#7c87b8" stroke-width="2" /><path d="M6 6h7v7H6z" fill="#26368c" /><path d="M15 15l7 7" stroke="#8d8a79" stroke-width="4" /></svg></button>
                <button aria-label="Zoom extents" class="flex h-full w-[31px] items-center justify-center"><svg class="h-6 w-6" viewBox="0 0 24 24"><circle cx="9" cy="9" r="7" fill="#dbe1f6" stroke="#7c87b8" stroke-width="2" /><path d="M5 8V5h3M10 5h3v3M5 10v3h3M10 13h3v-3" fill="none" stroke="#3a4aa0" stroke-width="2" /><path d="M15 15l7 7" stroke="#8d8a79" stroke-width="4" /></svg></button>
                <button aria-label="Zoom previous" class="flex h-full w-[35px] items-center justify-center border-r border-[#c9cdd9]"><svg class="h-6 w-6" viewBox="0 0 24 24" fill="none" stroke="#b4b6be" stroke-width="2"><circle cx="10" cy="9" r="7" /><path d="M13 4l-5 5 5 5M15 15l7 7" /></svg></button>
                <button aria-label="Background" class="flex h-full w-[31px] items-center justify-center"><svg class="h-5 w-4" viewBox="0 0 16 20"><path d="M1 3h14v14H1z" fill="#fff" stroke="#d5d7de" /></svg></button>
                <button aria-label="3D view" class="flex h-[31px] w-[31px] items-center justify-center rounded border-2 border-[#9d7628] bg-[#f5ac2a]"><svg class="h-5 w-5" viewBox="0 0 20 20"><path d="M3 7l7-4 7 4v6l-7 5-7-5z" fill="#211c3f" /><path d="M10 3l5 5-5 3-5-3z" fill="#f2eef6" /><path d="M4 10l5 4v3l-5-4z" fill="#5a63ba" /></svg></button>
              </div>
            </div>
          </div>
        </section>
      </div>

      <!-- Items grid -->
      <section class="h-[150px] shrink-0 border-t border-[#cdd0da] bg-[#fcfbfc] shadow-[inset_8px_0_0_#dde2ee]">
        <h3 class="ml-2 h-[22px] border-b border-[#d4d7e2] bg-[#f1f4fc] pl-1 text-[15px] leading-[22px]">Items</h3>
        <div class="pl-3">
          <table class="w-full table-fixed border-b-2 border-[#cfd8e4] text-left text-[15px]">
            <colgroup>
              <col class="w-[37px]" /><col class="w-[35px]" /><col class="w-[30px]" /><col class="w-[34px]" /><col class="w-[68px]" /><col class="w-[333px]" /><col class="w-[77px]" /><col class="w-[42px]" /><col class="w-[72px]" /><col class="w-[40px]" /><col class="w-[78px]" /><col class="w-[72px]" /><col class="w-[39px]" /><col class="w-[102px]" /><col class="w-[40px]" /><col class="w-[30px]" /><col />
            </colgroup>
            <thead>
              <tr class="h-[40px] whitespace-nowrap border-b-4 border-[#d9dce6] bg-[#f7f9fe] text-[#8a8c97]">
                <th class="border-r border-[#d0d4df] pl-1 font-normal">#</th>
                <th class="border-r border-[#d0d4df] pl-1.5 font-normal">Cat</th>
                <th class="border-r border-[#d0d4df] pl-1.5 font-normal">Sel</th>
                <th class="border-r border-[#d0d4df] pl-1.5 font-normal">Act</th>
                <th class="border-r border-[#d0d4df] pl-2 font-normal">Notes</th>
                <th class="border-r border-[#d0d4df] pl-2 font-normal">Description</th>
                <th class="border-r border-[#d0d4df] pl-2 font-normal">Coverage</th>
                <th class="border-r border-[#d0d4df] pl-2 font-normal">Calc</th>
                <th class="border-r border-[#d0d4df] pl-2 font-normal">Quantity</th>
                <th class="border-r border-[#d0d4df] pl-1.5 font-normal">Unit</th>
                <th class="border-r border-[#d0d4df] pl-1.5 font-normal">Unit Price</th>
                <th class="border-r border-[#d0d4df] pl-1.5 font-normal">Sales Tax</th>
                <th class="border-r border-[#d0d4df] pl-1.5 font-normal">RCV</th>
                <th class="border-r border-[#d0d4df] pl-2 font-normal">Depreciation</th>
                <th class="border-r border-[#d0d4df] pl-1.5 font-normal">ACV</th>
                <th class="border-r border-[#d0d4df]"></th>
                <th></th>
              </tr>
            </thead>
            <tbody>
              <tr class="h-[26px] bg-white *:border-r *:border-[#e3e6ec]">
                <td></td><td></td><td></td><td></td><td></td><td></td><td></td><td></td><td></td><td></td><td></td><td></td><td></td><td></td><td></td><td></td><td></td>
              </tr>
            </tbody>
          </table>
        </div>
      </section>
    </main>
  </body>
</html>
